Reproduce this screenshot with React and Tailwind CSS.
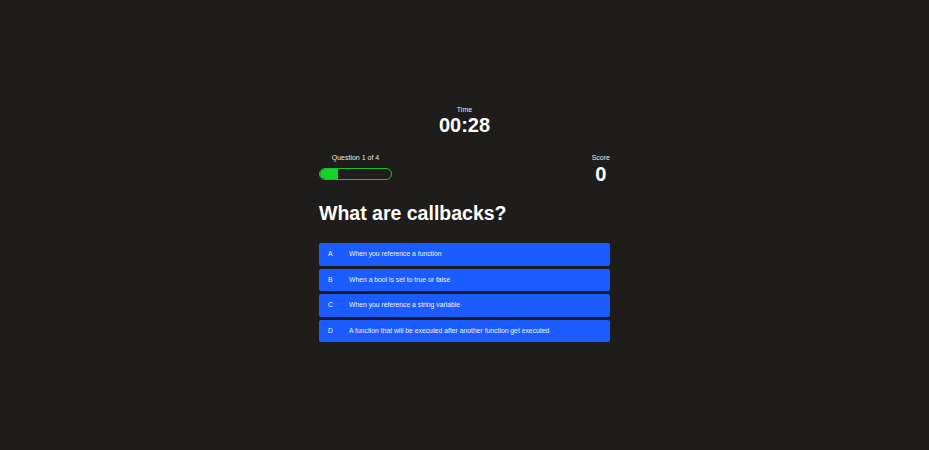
import React from "react";

const options = [
  ["A", "When you reference a function"],
  ["B", "When a bool is set to true or false"],
  ["C", "When you reference a string variable"],
  ["D", "A function that will be executed after another function get executed"],
];

export default function App() {
  return (
    <div
      className="w-full h-[450px] bg-[#1e1d1c] text-white flex justify-center"
      style={{ fontFamily: '"Liberation Sans", Arial, sans-serif' }}
    >
      <div className="w-[291px] pt-[105px] flex flex-col">
        <div className="flex flex-col items-center">
          <div className="text-[7px] leading-[9px] text-[#e6e6e6]">Time</div>
          <div className="text-[20px] leading-[22px] font-bold">00:28</div>
        </div>
        <div className="flex justify-between mt-[17px]">
          <div className="flex flex-col items-center w-[73px]">
            <div className="text-[7px] leading-[9px] text-[#e6e6e6]">Question 1 of 4</div>
            <div className="mt-[6px] w-[73px] h-[12px] rounded-full border border-[#1fbf2a] overflow-hidden">
              <div className="h-full w-[26%] bg-[#16d22c] rounded-l-full" />
            </div>
          </div>
          <div className="flex flex-col items-center">
            <div className="text-[7px] leading-[9px] text-[#e6e6e6]">Score</div>
            <div className="text-[20px] leading-[22px] font-bold mt-[1px]">0</div>
          </div>
        </div>
        <div className="text-[19.5px] leading-[24px] font-bold mt-[16px]">What are callbacks?</div>
        <div className="flex flex-col gap-[3px] mt-[18px]">
          {options.map(([l, t]) => (
            <div
              key={l}
              className="h-[22.5px] bg-[#1a5cff] rounded-[2px] flex items-center text-[6.8px] text-[#f2f4ff]"
            >
              <span className="w-[30px] pl-[9px]">{l}</span>
              <span>{t}</span>
            </div>
          ))}
        </div>
      </div>
    </div>
  );
}
